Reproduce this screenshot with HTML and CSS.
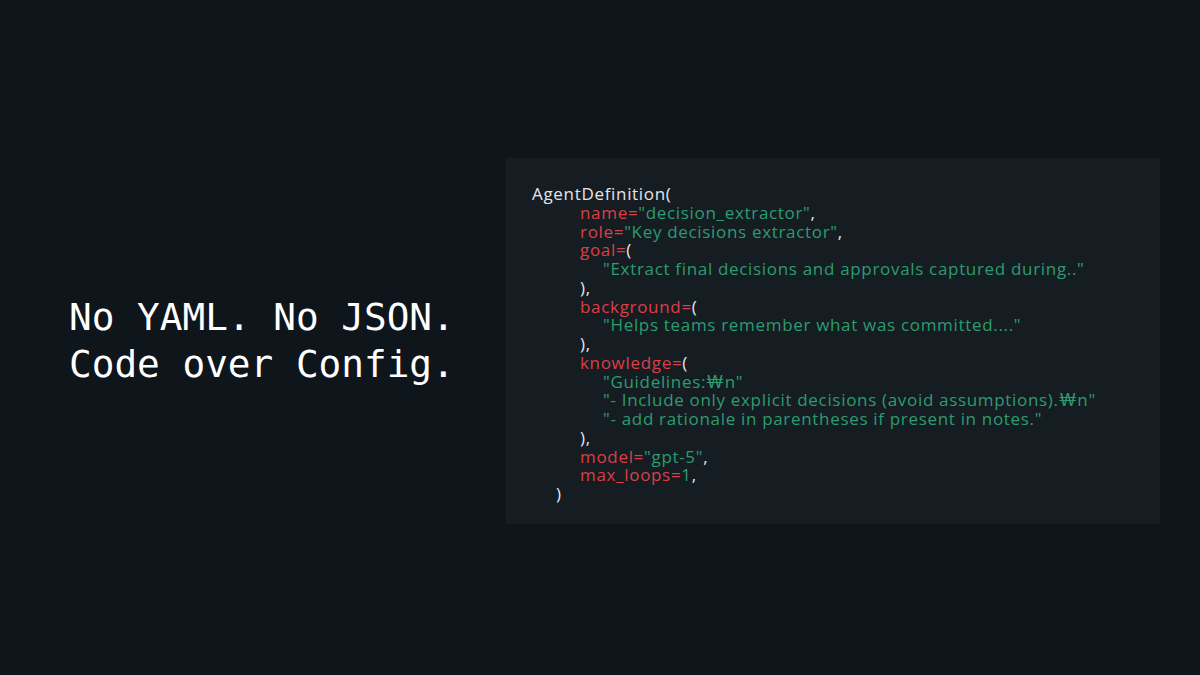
FILE: index.html
```html
<!DOCTYPE html>
<html lang="en">
<head>
<meta charset="utf-8">
<title>Code over Config</title>
<link rel="stylesheet" href="styles.css">
</head>
<body>
<main class="slide">
  <h1 class="headline">No YAML. No JSON.<br>Code over Config.</h1>
  <section class="code-card">
    <div class="ln"><span class="p">AgentDefinition(</span></div>
    <div class="ln i2"><span class="k">name=</span><span class="s">"decision_extractor"</span><span class="p">,</span></div>
    <div class="ln i2"><span class="k">role=</span><span class="s">"Key decisions extractor"</span><span class="p">,</span></div>
    <div class="ln i2"><span class="k">goal=</span><span class="p">(</span></div>
    <div class="ln i3"><span class="s">"Extract final decisions and approvals captured during.."</span></div>
    <div class="ln i2"><span class="p">),</span></div>
    <div class="ln i2"><span class="k">background=</span><span class="p">(</span></div>
    <div class="ln i3"><span class="s">"Helps teams remember what was committed...."</span></div>
    <div class="ln i2"><span class="p">),</span></div>
    <div class="ln i2"><span class="k">knowledge=</span><span class="p">(</span></div>
    <div class="ln i3"><span class="s">"Guidelines:₩n"</span></div>
    <div class="ln i3"><span class="s">"- Include only explicit decisions (avoid assumptions).₩n"</span></div>
    <div class="ln i3"><span class="s">"- add rationale in parentheses if present in notes."</span></div>
    <div class="ln i2"><span class="p">),</span></div>
    <div class="ln i2"><span class="k">model=</span><span class="s">"gpt-5"</span><span class="p">,</span></div>
    <div class="ln i2"><span class="k">max_loops=</span><span class="s">1</span><span class="p">,</span></div>
    <div class="ln i1"><span class="p">)</span></div>
  </section>
</main>
</body>
</html>
```
FILE: styles.css
```css
html, body {
  margin: 0;
  padding: 0;
  background: #0e151b;
}
.slide {
  width: 1200px;
  height: 675px;
  display: flex;
  align-items: center;
  box-sizing: border-box;
  padding: 7px 40px 0 69px;
}
.headline {
  margin: 0;
  font-family: "DejaVu Sans Mono", monospace;
  font-weight: normal;
  font-size: 37.7px;
  line-height: 47px;
  color: #ffffff;
  text-align: left;
}
.code-card {
  margin-left: auto;
  width: 654px;
  height: 366px;
  box-sizing: border-box;
  background: #151d23;
  padding: 27px 20px 20px 26px;
  font-family: "Open Sans", Lato, sans-serif;
  font-weight: 400;
  font-size: 17px;
  line-height: 18.75px;
  letter-spacing: 0.68px;
  color: #e4e6e8;
}
.ln { white-space: pre; }
.i1 { padding-left: 24px; }
.i2 { padding-left: 48px; }
.i3 { padding-left: 71px; }
.k { color: #dc3f45; }
.s { color: #2c9c6f; }
.p { color: #e4e6e8; }
```
